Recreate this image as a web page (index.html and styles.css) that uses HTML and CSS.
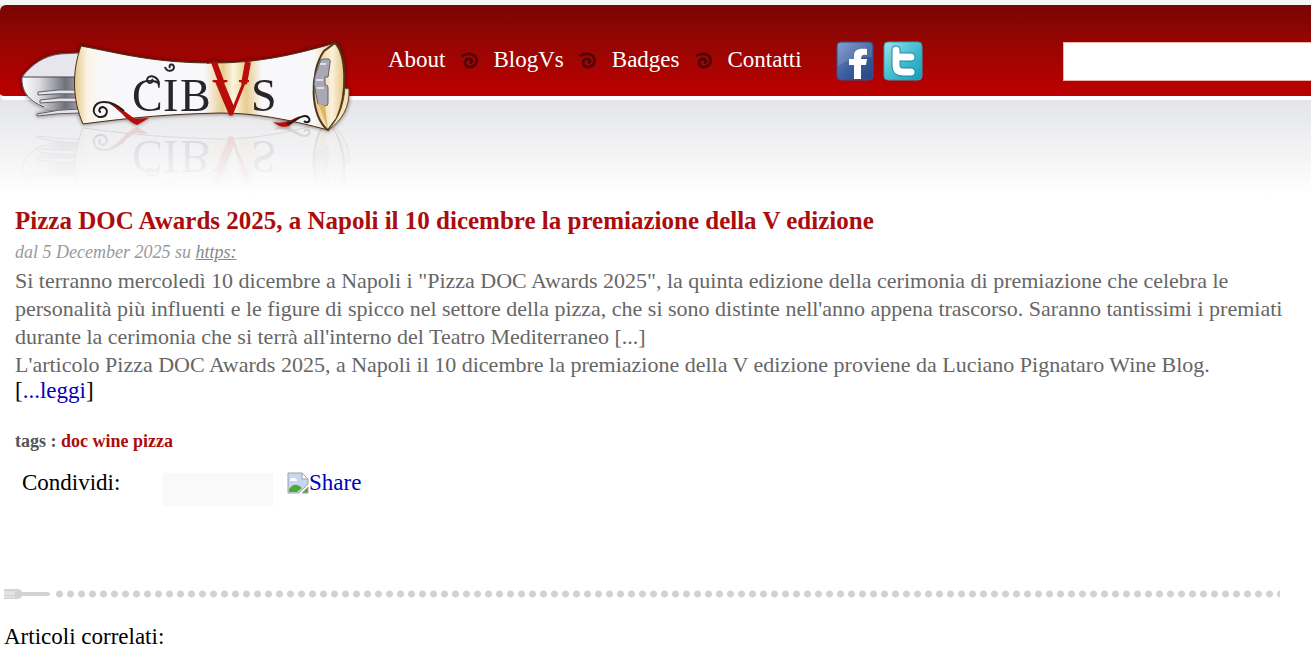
FILE: index.html
```
<!DOCTYPE html>
<html lang="it">
<head>
  <meta charset="UTF-8">
  <meta name="viewport" content="width=device-width, initial-scale=1.0">
  <title>Cibvs - Pizza DOC Awards 2025</title>
  <link rel="stylesheet" href="styles.css">
</head>
<body>
  <svg class="defs" width="0" height="0" aria-hidden="true">
    <symbol id="swirl" viewBox="0 0 20 20">
      <path d="M2 5C8 2 15 3 17 8c2 6-3 10-8 10-5-1-6-7-2-9 4-1 7 2 4 4" fill="none" stroke="#4d0508" stroke-width="3" stroke-linecap="round"/>
    </symbol>
  </svg>

  <header class="header">
    <div class="bar">
      <a class="logo" href="#" aria-label="Cibvs">
        <svg width="370" height="190" viewBox="0 5 370 190">
          <defs>
            <linearGradient id="metal" x1="0" y1="0" x2="1" y2="0">
              <stop offset="0" stop-color="#ffffff"/>
              <stop offset=".3" stop-color="#dcdce0"/>
              <stop offset=".75" stop-color="#70707c"/>
              <stop offset="1" stop-color="#a4a4ae"/>
            </linearGradient>
            <linearGradient id="paper" x1="0" y1="0" x2="1" y2="0">
              <stop offset="0" stop-color="#e6c68a"/>
              <stop offset=".05" stop-color="#faf4e6"/>
              <stop offset=".1" stop-color="#f8f8fa"/>
              <stop offset=".5" stop-color="#f8f8fa"/>
              <stop offset=".57" stop-color="#e8cc90"/>
              <stop offset=".61" stop-color="#fbf4e0"/>
              <stop offset=".66" stop-color="#e8cc90"/>
              <stop offset=".72" stop-color="#f8f8fa"/>
              <stop offset=".92" stop-color="#f8f8fa"/>
              <stop offset="1" stop-color="#e6c27a"/>
            </linearGradient>
            <linearGradient id="roll" x1="0" y1="0" x2="1" y2="0">
              <stop offset="0" stop-color="#e9c47c"/>
              <stop offset=".6" stop-color="#fbf1dc"/>
              <stop offset="1" stop-color="#e6c582"/>
            </linearGradient>
            <linearGradient id="fade" x1="0" y1="126" x2="0" y2="190" gradientUnits="userSpaceOnUse">
              <stop offset="0" stop-color="#fff" stop-opacity=".13"/>
              <stop offset="1" stop-color="#fff" stop-opacity="0"/>
            </linearGradient>
            <mask id="mirror" maskUnits="userSpaceOnUse" x="0" y="126" width="370" height="70">
              <rect x="0" y="126" width="370" height="70" fill="url(#fade)"/>
            </mask>
            <filter id="shade" x="-10%" y="-10%" width="120%" height="130%">
              <feDropShadow dx="0" dy="0" stdDeviation="2" flood-color="#200" flood-opacity=".6"/>
            </filter>
          </defs>
          <g mask="url(#mirror)">
            <use href="#scroll" transform="matrix(1 0 0 -1 0 252)"/>
          </g>
          <g filter="url(#shade)">
            <g id="scroll">
              <path d="M22 77C32 64 44 56 60 54L80 53V78H22z" fill="#e6e6ec"/>
              <path d="M22 77H80V111C66 114 46 110 36 104C25 97 21 87 22 77z" fill="url(#metal)"/>
              <path d="M22 77C32 64 44 56 60 54L78 53" fill="none" stroke="#5b5b66"/>
              <path d="M22 77H78M22 77C21 90 28 101 44 107" fill="none" stroke="#45454e"/>
              <path d="M38 92Q58 89 79 90V94Q58 93 38 95zM40 100Q58 97 79 98V102Q58 101 40 103zM37 114Q58 109 80 109V113Q58 113 37 116z" fill="#e4e4ea" stroke="#5e5e68" stroke-width="1"/>
              <path d="M81 46C123 54 155 63 214 63C255 63 291 56 335 43C310 62 311 111 328 130C287 119 255 113 220 113C173 114 135 117 83 124C72 99 72 71 81 46z" fill="url(#paper)" stroke="#493018" stroke-width="1"/>
              <path d="M335 43C346 54 348 92 337 118L328 130C310 117 309 72 324 51z" fill="url(#roll)" stroke="#49351e" stroke-width="2"/>
              <path d="M320 62Q320 59 323 59H329Q331 60 330 63L328 77H325V85H326Q328 85 328 88V103Q328 106 325 106L318 104L314 84L315 76z" fill="#a9a9b5" stroke="#62626c"/>
              <path d="M320 64H326M316 80H323M317 88H324" fill="none" stroke="#dedee6" stroke-width="2"/>
              <path d="M318 103L328 129L325 106z" fill="#dcb668"/>
              <path d="M345 88L349 89C350 107 342 121 328 130C338 119 343 108 345 88z" fill="#f5e2b8" stroke="#5e4929"/>
              <path d="M110 103C120 107 128 114 135 119L149 118 137 125C128 122 122 112 110 104z" fill="#b50908"/>
              <path d="M273 122C285 125 292 119 300 116L289 126C283 128 278 126 273 122z" fill="#b50908"/>
              <path d="M124 111C116 104 110 102 104 102C93 102 90 114 99 117C107 118 110 109 103 107C99 107 98 112 101 112" fill="none" stroke="#231d1d" stroke-width="2"/>
              <path d="M287 124C296 122 299 115 306 116C313 119 308 125 304 121" fill="none" stroke="#231d1d" stroke-width="2"/>
              <path d="M214 62L222 84M248 62L244 84" fill="none" stroke="#b80b0a" stroke-width="6"/>
              <path d="M207 63L216 60M245 61L254 60" fill="none" stroke="#8d0808" stroke-width="2"/>
              <g class="logo-text">
                <text x="132" y="111">C</text>
                <text x="163" y="111">I</text>
                <text x="180" y="111">B</text>
                <text class="logo-v" x="212" y="115">V</text>
                <text x="251" y="111">S</text>
              </g>
              <path d="M159 85C159 75 147 74 147 80C148 85 154 83 152 79M165 67C167 73 174 71 174 67C173 63 168 64 170 68" fill="none" stroke="#282529" stroke-width="2"/>
            </g>
          </g>
        </svg>
      </a>

      <nav class="menu">
        <a href="#">About</a>
        <svg class="swirl" aria-hidden="true"><use href="#swirl"/></svg>
        <a href="#">BlogVs</a>
        <svg class="swirl" aria-hidden="true"><use href="#swirl"/></svg>
        <a href="#">Badges</a>
        <svg class="swirl" aria-hidden="true"><use href="#swirl"/></svg>
        <a href="#">Contatti</a>
      </nav>

      <div class="social">
        <a href="#" aria-label="Facebook">
          <svg width="38" height="40" viewBox="0 0 38 40">
            <defs>
              <linearGradient id="fb" x1="0" y1="0" x2="1" y2="1">
                <stop offset="0" stop-color="#7494c5"/>
                <stop offset=".5" stop-color="#3f5fa0"/>
                <stop offset="1" stop-color="#294384"/>
              </linearGradient>
            </defs>
            <rect x="1" y="1" width="36" height="38" rx="4" fill="url(#fb)" stroke="#365391"/>
            <path d="M2 5Q2 2 5 2H33Q36 2 36 5V16Q17 15 2 25z" fill="#fff" opacity=".12"/>
            <path d="M18 38V24H13V18H18V15C18 9 22 7 31 8V14C27 13 25 14 25 18H31L30 24H25V38z" fill="#fff"/>
          </svg>
        </a>
        <a href="#" aria-label="Twitter">
          <svg width="40" height="40" viewBox="0 0 40 40">
            <defs>
              <linearGradient id="tw" x1="0" y1="0" x2="1" y2="1">
                <stop offset="0" stop-color="#a1e1e8"/>
                <stop offset=".5" stop-color="#46bdd2"/>
                <stop offset="1" stop-color="#139bbb"/>
              </linearGradient>
            </defs>
            <rect x="1" y="1" width="38" height="38" rx="4" fill="url(#tw)" stroke="#379fae"/>
            <path d="M13 9V24Q13 31 20 31H28M13 16H28" fill="none" stroke="#168ba5" stroke-width="9" stroke-linecap="round"/>
            <path d="M13 9V24Q13 31 20 31H28M13 16H28" fill="none" stroke="#fff" stroke-width="7" stroke-linecap="round"/>
          </svg>
        </a>
      </div>

      <input class="search" type="text" aria-label="Cerca">
    </div>
  </header>

  <main>
    <article class="post">
      <h1>Pizza DOC Awards 2025, a Napoli il 10 dicembre la premiazione della V edizione</h1>
      <p class="date">dal 5 December 2025 su <a href="#">https:</a></p>
      <div class="text">
        <p>Si terranno mercoledì 10 dicembre a Napoli i "Pizza DOC Awards 2025", la quinta edizione della cerimonia di premiazione che celebra le personalità più influenti e le figure di spicco nel settore della pizza, che si sono distinte nell'anno appena trascorso. Saranno tantissimi i premiati durante la cerimonia che si terrà all'interno del Teatro Mediterraneo [...]</p>
        <p>L'articolo Pizza DOC Awards 2025, a Napoli il 10 dicembre la premiazione della V edizione proviene da Luciano Pignataro Wine Blog.</p>
      </div>
      <p class="more">[<a href="#">...leggi</a>]</p>
      <p class="tags">tags : <a href="#">doc</a> <a href="#">wine</a> <a href="#">pizza</a></p>
      <div class="share">
        <span class="share-label">Condividi:</span>
        <div class="share-box"></div>
        <a class="share-link" href="#">
          <svg width="22" height="22" viewBox="0 0 22 22" aria-hidden="true">
            <path d="M1 1H15L21 7V12L12 21H1z" fill="#c6d7f2" stroke="#a2a2a2"/>
            <path d="M15 1V7H21z" fill="#fff" stroke="#a2a2a2"/>
            <path d="M3 8Q4 5 7 6Q10 6 10 9H3z" fill="#fff"/>
            <path d="M2 20V17Q8 9 15 16L10 20z" fill="#4fa832"/>
            <path d="M21 15V21H15z" fill="#4fa832" stroke="#a2a2a2"/>
          </svg>Share</a>
      </div>
    </article>

    <div class="divider">
      <svg width="46" height="12" viewBox="0 0 46 12" aria-hidden="true">
        <path d="M0 1H13Q17 1 18 4H43Q46 4 46 6T43 8H18Q17 11 13 11H0z" fill="#d2d2d2"/>
        <path d="M0 4H11M0 6H11M0 9H11" stroke="#f3f3f3" stroke-width="1"/>
      </svg>
      <div class="dots"></div>
    </div>

    <h2>Articoli correlati:</h2>
  </main>
</body>
</html>
```

FILE: styles.css
```
* {
  box-sizing: border-box;
  margin: 0;
  padding: 0;
}

body {
  font-family: "Liberation Serif", "Times New Roman", serif;
  font-size: 23px;
  line-height: 28px;
  color: #000;
  background: #fff;
}

a {
  color: #0000b8;
  text-decoration: none;
}

.defs {
  display: block;
}

.header {
  height: 195px;
  border-top: 5px solid #f5f5f5;
  background: linear-gradient(#e4e5e8 95px, #fff);
}

.bar {
  display: flex;
  align-items: flex-start;
  height: 95px;
  background: linear-gradient(#780504, #920603 35%, #bc0000);
  border-bottom: 4px solid #fff;
  border-radius: 6px 0 0 6px;
}

.logo {
  height: 190px;
}

.logo svg,
.social svg {
  display: block;
}

.logo-text {
  font-size: 46px;
  fill: #282529;
}

.logo-v {
  font-size: 52px;
  font-weight: bold;
  fill: #b80b0a;
}

.menu {
  display: flex;
  align-items: center;
  gap: 14px;
  padding: 41px 0 0 18px;
}

.menu a {
  color: #fff;
}

.swirl {
  width: 20px;
  height: 18px;
}

.social {
  display: flex;
  gap: 9px;
  padding: 36px 0 0 34px;
}

.search {
  width: 248px;
  height: 39px;
  margin: 37px 0 0 auto;
  padding: 0 8px;
  border: 1px solid #f3b3a8;
  border-right: 0;
  background: #fff;
  font: inherit;
}

.post {
  padding: 10px 20px 0 15px;
}

h1 {
  font-size: 25px;
  line-height: 32px;
  color: #ab0c0c;
}

.date {
  font-size: 18px;
  line-height: 30px;
  font-style: italic;
  color: #999;
}

.date a {
  color: #888;
  text-decoration: underline;
}

.text {
  font-size: 22px;
  color: #666;
}

.more {
  line-height: 24px;
}

.tags {
  margin-top: 24px;
  font-size: 18px;
  font-weight: bold;
  color: #555;
}

.tags a {
  color: #ab0c0c;
}

.share {
  display: flex;
  align-items: flex-start;
  gap: 14px;
  padding: 14px 0 0 7px;
}

.share-label {
  width: 127px;
}

.share-box {
  width: 110px;
  height: 33px;
  margin-top: 4px;
  background: #f9f9f9;
}

.share-link {
  display: flex;
  align-items: center;
}

.divider {
  display: flex;
  align-items: center;
  gap: 4px;
  margin: 82px 31px 0 4px;
}

.dots {
  flex: 1;
  height: 12px;
  background: radial-gradient(circle, #d2d2d2 3px, transparent 4px) 0 0 / 11px 12px;
}

h2 {
  margin: 23px 4px;
  font-size: 23px;
  font-weight: normal;
}
```
